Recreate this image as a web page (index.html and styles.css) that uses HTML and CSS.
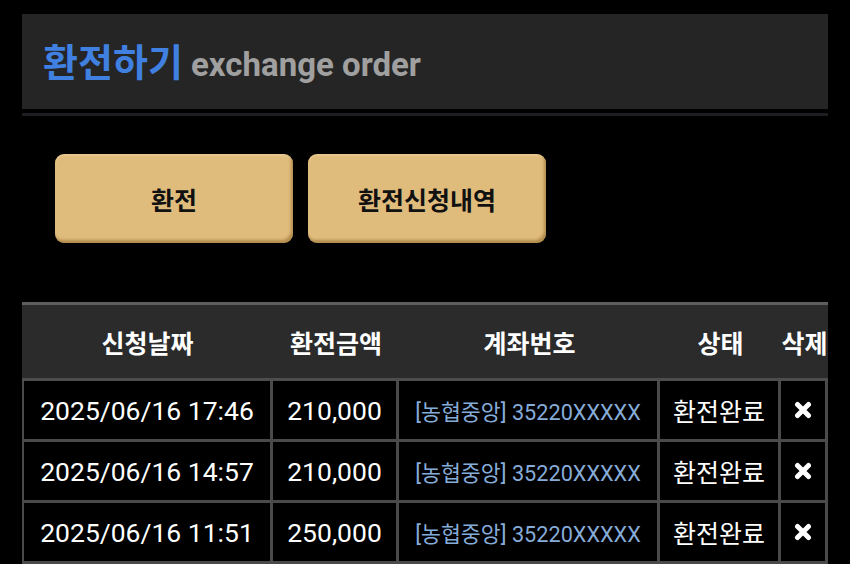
FILE: index.html
```html
<!DOCTYPE html>
<html lang="ko">
<head>
<meta charset="utf-8">
<title>환전하기</title>
<link rel="stylesheet" href="styles.css">
</head>
<body>
<div class="page">
  <div class="title-bar">
    <h1 class="title"><span class="title-ko">환전하기</span> <span class="title-en">exchange order</span></h1>
  </div>
  <div class="title-rule"></div>
  <div class="tabs">
    <button class="tab">환전</button>
    <button class="tab">환전신청내역</button>
  </div>
  <table class="list">
    <colgroup>
      <col class="c-date"><col class="c-amt"><col class="c-acct"><col class="c-state"><col class="c-del">
    </colgroup>
    <thead>
      <tr><th>신청날짜</th><th>환전금액</th><th>계좌번호</th><th>상태</th><th>삭제</th></tr>
    </thead>
    <tbody>
      <tr>
        <td class="num">2025/06/16 17:46</td><td class="num">210,000</td><td class="acct">[농협중앙] 35220XXXXX</td><td>환전완료</td>
        <td><svg class="x" viewBox="0 0 18 18"><path d="M3.5 3.5L14.5 14.5M14.5 3.5L3.5 14.5"/></svg></td>
      </tr>
      <tr>
        <td class="num">2025/06/16 14:57</td><td class="num">210,000</td><td class="acct">[농협중앙] 35220XXXXX</td><td>환전완료</td>
        <td><svg class="x" viewBox="0 0 18 18"><path d="M3.5 3.5L14.5 14.5M14.5 3.5L3.5 14.5"/></svg></td>
      </tr>
      <tr>
        <td class="num">2025/06/16 11:51</td><td class="num">250,000</td><td class="acct">[농협중앙] 35220XXXXX</td><td>환전완료</td>
        <td><svg class="x" viewBox="0 0 18 18"><path d="M3.5 3.5L14.5 14.5M14.5 3.5L3.5 14.5"/></svg></td>
      </tr>
    </tbody>
  </table>
</div>
</body>
</html>
```

FILE: styles.css
```css
html, body {
  margin: 0;
  padding: 0;
  background: #000;
}
body {
  font-family: Roboto, "Noto Sans CJK KR", sans-serif;
  color: #fff;
}
.page {
  padding: 14px 22px 0 22px;
}
.title-bar {
  background: #252525;
  height: 95px;
  display: flex;
  align-items: center;
  padding-left: 21px;
}
.title {
  margin: 0;
  font-size: 33px;
  font-weight: 700;
  line-height: 1;
  padding-top: 3px;
}
.title-ko {
  color: #3f80e0;
  font-size: 38px;
}
.title-en {
  color: #a0a0a0;
}
.title-rule {
  height: 3px;
  margin-top: 4px;
  background: #1e1e22;
}
.tabs {
  display: flex;
  gap: 15px;
  padding: 38px 0 0 33px;
}
.tab {
  width: 238px;
  height: 89px;
  border: none;
  border-radius: 9px;
  background: #e0bc7c;
  box-shadow: inset -2px -3px 3px rgba(120, 80, 20, 0.45), inset 0 2px 2px rgba(255, 240, 200, 0.25);
  font-family: Roboto, "Noto Sans CJK KR", sans-serif;
  font-size: 25px;
  font-weight: 700;
  color: #111;
  padding: 0;
}
.list {
  margin-top: 59px;
  width: 806px;
  border-collapse: separate;
  border-spacing: 0;
  table-layout: fixed;
}
.c-date { width: 251px; }
.c-amt { width: 126px; }
.c-acct { width: 261px; }
.c-state { width: 121px; }
.c-del { width: 47px; }
.list th {
  background: #2b2b2b;
  height: 73px;
  padding: 0;
  font-size: 25px;
  font-weight: 700;
  color: #fff;
  border-top: 3px solid #5e5e5e;
  border-bottom: 3px solid #4d4d4d;
}
.list td {
  height: 58px;
  padding: 0;
  text-align: center;
  font-size: 25px;
  border-right: 3px solid #4a4a4a;
  border-bottom: 3px solid #4a4a4a;
  background: #000;
  white-space: nowrap;
}
.list td:first-child {
  border-left: 2px solid #4a4a4a;
}
.list td.num {
  font-size: 26.5px;
}
.list td.acct {
  font-size: 21.7px;
  color: #86acd9;
}
.x {
  width: 18px;
  height: 18px;
  display: block;
  margin: 0 auto;
  fill: none;
  stroke: #fff;
  stroke-width: 5;
  stroke-linecap: round;
}
```
